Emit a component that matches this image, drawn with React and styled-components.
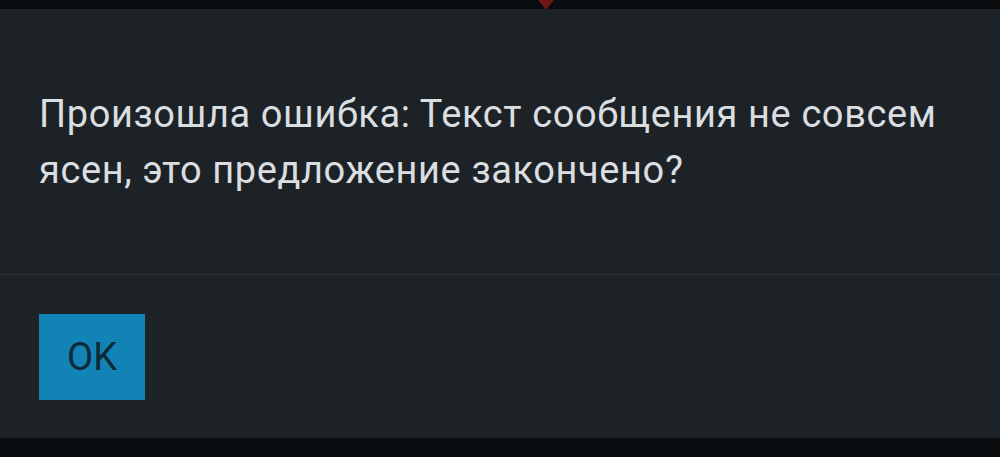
import React from 'react';
import styled, { createGlobalStyle } from 'styled-components';

const GlobalStyle = createGlobalStyle`
  html, body {
    margin: 0;
    padding: 0;
    background: #0a0d0f;
  }
  * {
    box-sizing: border-box;
  }
`;

const Screen = styled.div`
  position: relative;
  width: 1000px;
  height: 457px;
  padding-top: 9px;
  background: #0a0d0f;
  overflow: hidden;
`;

const Marker = styled.div`
  position: absolute;
  top: 0;
  left: 538px;
  width: 0;
  height: 0;
  border-left: 8px solid transparent;
  border-right: 8px solid transparent;
  border-top: 10px solid #6e1616;
`;

const Dialog = styled.div`
  position: relative;
  display: flex;
  flex-direction: column;
  height: 429px;
  background: #1d2226;
`;

const Message = styled.div`
  display: flex;
  align-items: center;
  height: 266px;
  padding: 0 20px 0 39px;
  border-bottom: 1px solid #2c3337;
  font-family: Roboto, "Noto Sans", sans-serif;
  font-size: 38px;
  letter-spacing: 0.6px;
  line-height: 56px;
  color: #dadee1;
`;

const Footer = styled.div`
  display: flex;
  align-items: center;
  flex: 1;
  padding: 0 39px;
`;

const OkButton = styled.button`
  width: 106px;
  height: 86px;
  border: none;
  border-radius: 0;
  background: #1283b5;
  color: #0e2a39;
  font-family: Roboto, "Noto Sans", sans-serif;
  font-size: 38px;
  cursor: pointer;
`;

export default function App() {
  return (
    <>
      <GlobalStyle />
      <Screen>
        <Marker />
        <Dialog>
          <Message>
            Произошла ошибка: Текст сообщения не совсем ясен, это предложение закончено?
          </Message>
          <Footer>
            <OkButton>OK</OkButton>
          </Footer>
        </Dialog>
      </Screen>
    </>
  );
}
